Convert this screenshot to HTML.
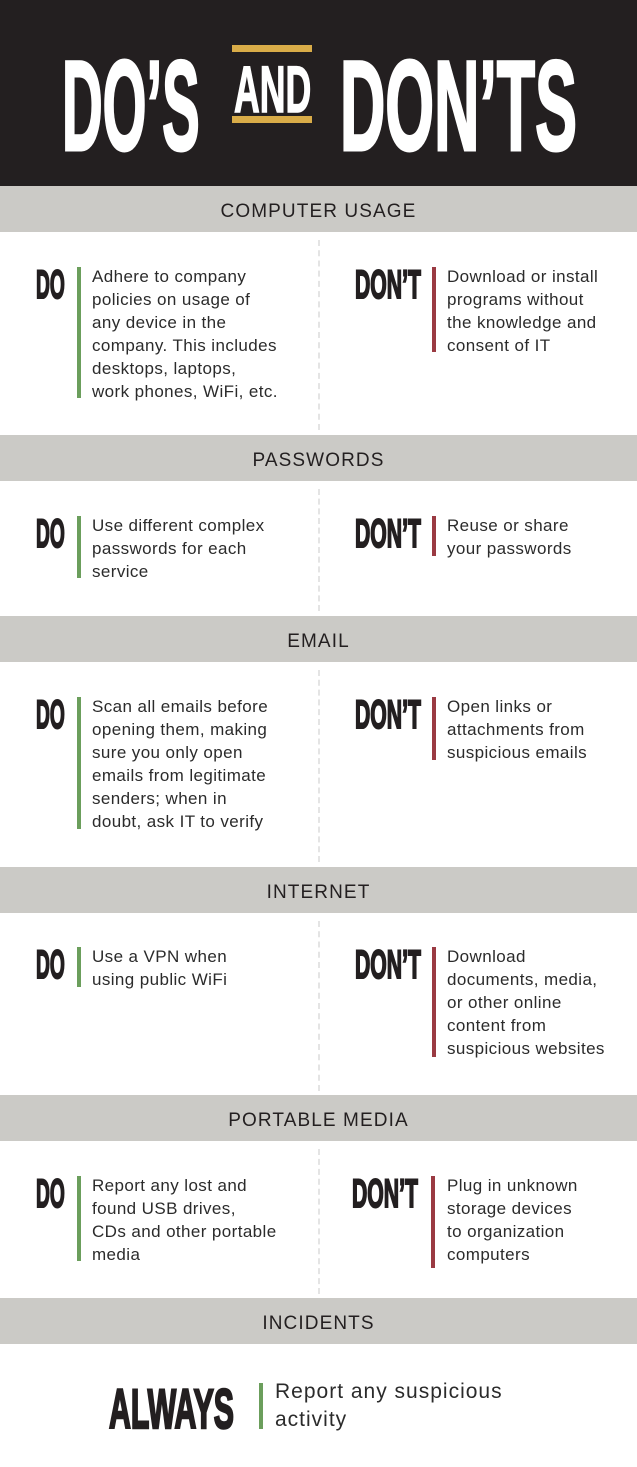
<!DOCTYPE html>
<html><head><meta charset="utf-8"><style>
*{margin:0;padding:0;box-sizing:border-box}
body{width:637px;height:1467px;position:relative;background:#fff;font-family:"Liberation Sans",sans-serif;overflow:hidden}
.hdr{position:absolute;left:0;top:0;width:637px;height:186px;background:#231f20}
.bar{position:absolute;left:0;width:637px;height:46px;background:#cbcac6;color:#231f20;font-size:19px;text-align:center;line-height:46px;padding-top:3px;letter-spacing:1.1px}
.cond{position:absolute;font-weight:bold;transform-origin:0 0;white-space:nowrap;line-height:1}
.lbl{font-size:40px;color:#231f20;-webkit-text-stroke:2px #231f20}
.g{position:absolute;width:4px;background:#6b9e5c}
.r{position:absolute;width:4px;background:#9a3a42}
.t{position:absolute;font-size:17px;letter-spacing:0.4px;line-height:23px;color:#2b2b2b;white-space:nowrap}
.div{position:absolute;left:318px;width:0;border-left:2px dashed #e4e4e4}
</style></head><body>
<div class="hdr"></div>
<div class="cond" style="left:62px;top:43px;font-size:128px;color:#fff;transform:scaleX(0.44);-webkit-text-stroke:3px #fff">DO’S</div>
<div style="position:absolute;left:232px;top:45px;width:80px;height:7px;background:#d9ac48"></div>
<div style="position:absolute;left:232px;top:116px;width:80px;height:7px;background:#d9ac48"></div>
<div class="cond" style="left:234px;top:56px;font-size:66px;color:#fff;transform:scaleX(0.54);-webkit-text-stroke:1.5px #fff">AND</div>
<div class="cond" style="left:340px;top:43px;font-size:128px;color:#fff;transform:scaleX(0.49);-webkit-text-stroke:3px #fff">DON’TS</div>

<div class="bar" style="top:186px">COMPUTER USAGE</div>
<div class="div" style="top:240px;height:190px"></div>
<div class="cond lbl" style="left:36px;top:265px;transform:scaleX(0.48)">DO</div>
<div class="g" style="left:77px;top:267px;height:131px"></div>
<div class="t" style="left:92px;top:265px">Adhere to company<br>policies on usage of<br>any device in the<br>company. This includes<br>desktops, laptops,<br>work phones, WiFi, etc.</div>
<div class="cond lbl" style="left:355px;top:265px;transform:scaleX(0.53)">DON’T</div>
<div class="r" style="left:432px;top:267px;height:85px"></div>
<div class="t" style="left:447px;top:265px">Download or install<br>programs without<br>the knowledge and<br>consent of IT</div>

<div class="bar" style="top:435px">PASSWORDS</div>
<div class="div" style="top:489px;height:122px"></div>
<div class="cond lbl" style="left:36px;top:514px;transform:scaleX(0.48)">DO</div>
<div class="g" style="left:77px;top:516px;height:62px"></div>
<div class="t" style="left:92px;top:514px">Use different complex<br>passwords for each<br>service</div>
<div class="cond lbl" style="left:355px;top:514px;transform:scaleX(0.53)">DON’T</div>
<div class="r" style="left:432px;top:516px;height:40px"></div>
<div class="t" style="left:447px;top:514px">Reuse or share<br>your passwords</div>

<div class="bar" style="top:616px">EMAIL</div>
<div class="div" style="top:670px;height:192px"></div>
<div class="cond lbl" style="left:36px;top:695px;transform:scaleX(0.48)">DO</div>
<div class="g" style="left:77px;top:697px;height:132px"></div>
<div class="t" style="left:92px;top:695px">Scan all emails before<br>opening them, making<br>sure you only open<br>emails from legitimate<br>senders; when in<br>doubt, ask IT to verify</div>
<div class="cond lbl" style="left:355px;top:695px;transform:scaleX(0.53)">DON’T</div>
<div class="r" style="left:432px;top:697px;height:63px"></div>
<div class="t" style="left:447px;top:695px">Open links or<br>attachments from<br>suspicious emails</div>

<div class="bar" style="top:867px">INTERNET</div>
<div class="div" style="top:921px;height:170px"></div>
<div class="cond lbl" style="left:36px;top:945px;transform:scaleX(0.48)">DO</div>
<div class="g" style="left:77px;top:947px;height:40px"></div>
<div class="t" style="left:92px;top:945px">Use a VPN when<br>using public WiFi</div>
<div class="cond lbl" style="left:355px;top:945px;transform:scaleX(0.53)">DON’T</div>
<div class="r" style="left:432px;top:947px;height:110px"></div>
<div class="t" style="left:447px;top:945px">Download<br>documents, media,<br>or other online<br>content from<br>suspicious websites</div>

<div class="bar" style="top:1095px">PORTABLE MEDIA</div>
<div class="div" style="top:1149px;height:145px"></div>
<div class="cond lbl" style="left:36px;top:1174px;transform:scaleX(0.48)">DO</div>
<div class="g" style="left:77px;top:1176px;height:85px"></div>
<div class="t" style="left:92px;top:1174px">Report any lost and<br>found USB drives,<br>CDs and other portable<br>media</div>
<div class="cond lbl" style="left:352px;top:1174px;transform:scaleX(0.53)">DON’T</div>
<div class="r" style="left:431px;top:1176px;height:92px"></div>
<div class="t" style="left:447px;top:1174px">Plug in unknown<br>storage devices<br>to organization<br>computers</div>

<div class="bar" style="top:1298px">INCIDENTS</div>
<div class="cond" style="left:109px;top:1381px;font-size:56px;color:#231f20;transform:scaleX(0.54);-webkit-text-stroke:2.5px #231f20">ALWAYS</div>
<div class="g" style="left:259px;top:1383px;height:46px"></div>
<div class="t" style="left:275px;top:1378px;font-size:21px;line-height:28px;letter-spacing:1px">Report any suspicious<br>activity</div>
</body></html>
